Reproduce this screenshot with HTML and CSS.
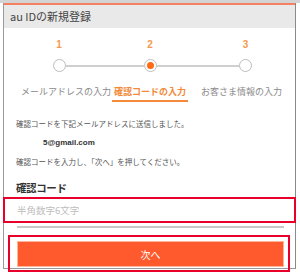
FILE: index.html
```html
<!DOCTYPE html>
<html lang="ja">
<head>
<meta charset="utf-8">
<link rel="stylesheet" href="styles.css">
</head>
<body>
<div class="topstrip"></div>
<div class="frame">
  <div class="accent"></div>
  <div class="header">au IDの新規登録</div>
  <div class="steps">
    <div class="num">1</div>
    <div class="num">2</div>
    <div class="num">3</div>
    <div class="track first"><span class="ln"></span><span class="dot"></span><span class="ln"></span></div>
    <div class="track"><span class="ln"></span><span class="dot active"></span><span class="ln"></span></div>
    <div class="track last"><span class="ln"></span><span class="dot"></span><span class="ln"></span></div>
    <div class="lbl l1">メールアドレスの入力</div>
    <div class="lbl cur"><span>確認コードの入力</span></div>
    <div class="lbl l3">お客さま情報の入力</div>
  </div>
  <div class="content">
    <p class="txt">確認コードを下記メールアドレスに送信しました。</p>
    <p class="mail">5@gmail.com</p>
    <p class="txt">確認コードを入力し、「次へ」を押してください。</p>
    <h2 class="h">確認コード</h2>
    <input class="code" type="text" placeholder="半角数字6文字">
    <button class="next">次へ</button>
  </div>
</div>
<div class="mark mark-input"></div>
<div class="mark mark-btn"></div>
</body>
</html>
```
FILE: styles.css
```css
* { box-sizing: border-box; }
html, body { margin: 0; padding: 0; }
body {
  width: 300px;
  height: 277px;
  background: #fff;
  position: relative;
  overflow: hidden;
  font-family: "Noto Sans CJK JP", "Noto Sans", sans-serif;
  color: #444;
}
.topstrip { height: 3px; background: #d4d4d4; }
.frame {
  margin-left: 3px;
  width: 293px;
  height: 266px;
  border-left: 1px solid #9a9a9a;
  border-right: 1px solid #8a8a8a;
  border-bottom: 1px solid #9a9a9a;
}
.accent { height: 2px; background: #f58060; }
.header {
  height: 23px;
  background: #e9e9e9;
  padding-left: 6px;
  font-size: 11px;
  line-height: 23px;
  color: #444;
}
.steps {
  display: grid;
  grid-template-columns: 88px 94px 97px;
  padding-left: 11px;
  padding-top: 11px;
}
.num {
  text-align: center;
  font-family: "Liberation Sans", sans-serif;
  font-weight: bold;
  font-size: 10px;
  line-height: 12px;
  color: #f39a4c;
}
.track {
  display: flex;
  align-items: center;
  height: 13px;
  margin-top: 8px;
}
.ln { flex: 1; height: 2px; background: #cfcfcf; }
.first .ln:first-child, .last .ln:last-child { background: transparent; }
.dot {
  width: 13px;
  height: 13px;
  border-radius: 50%;
  border: 1.5px solid #bdbdbd;
  background: #fff;
  display: flex;
  align-items: center;
  justify-content: center;
}
.dot.active::after {
  content: "";
  width: 7px;
  height: 7px;
  border-radius: 50%;
  background: #ff6a14;
}
.lbl {
  margin-top: 14px;
  text-align: center;
  font-size: 9px;
  line-height: 12px;
  color: #8a8a8a;
  white-space: nowrap;
}
.l1 { padding-left: 6px; }
.l3 { padding-right: 8px; }
.cur span {
  display: inline-block;
  color: #f28a3a;
  font-weight: bold;
  padding: 0 2px 2px;
  border-bottom: 2px solid #f58b3a;
}
.content { padding: 17px 10px 0 12px; }
.txt {
  margin: 0;
  font-size: 7.5px;
  line-height: 10px;
  color: #555;
  white-space: nowrap;
}
.mail {
  margin: 9px 0 9px 27px;
  font-family: "Liberation Sans", sans-serif;
  font-weight: bold;
  font-size: 8px;
  line-height: 10px;
  color: #333;
}
.h {
  margin: 14px 0 0;
  font-size: 10.5px;
  line-height: 14px;
  font-weight: bold;
  color: #333;
  letter-spacing: -0.4px;
}
.code {
  display: block;
  width: 267px;
  margin: 4px 0 0 1px;
  height: 29px;
  padding: 0 0 5px;
  border: none;
  border-bottom: 2px solid #c8c8c8;
  outline: none;
  font-family: "Noto Sans CJK JP", sans-serif;
  font-size: 9.5px;
  background: transparent;
}
.code::placeholder { color: #bdbdbd; }
.next {
  display: block;
  width: 267px;
  margin: 13px 0 0 1px;
  height: 26px;
  border: 1px solid #ffb49c;
  background: #ff5a2e;
  color: #fff;
  font-family: "Noto Sans CJK JP", sans-serif;
  font-size: 10px;
  padding: 0;
}
.mark {
  position: absolute;
  border: 2.5px solid #e8002a;
  pointer-events: none;
}
.mark-input { left: 3px; top: 197px; width: 293px; height: 26px; }
.mark-btn { left: 8px; top: 235px; width: 282px; height: 37px; border-width: 2px; }
```
